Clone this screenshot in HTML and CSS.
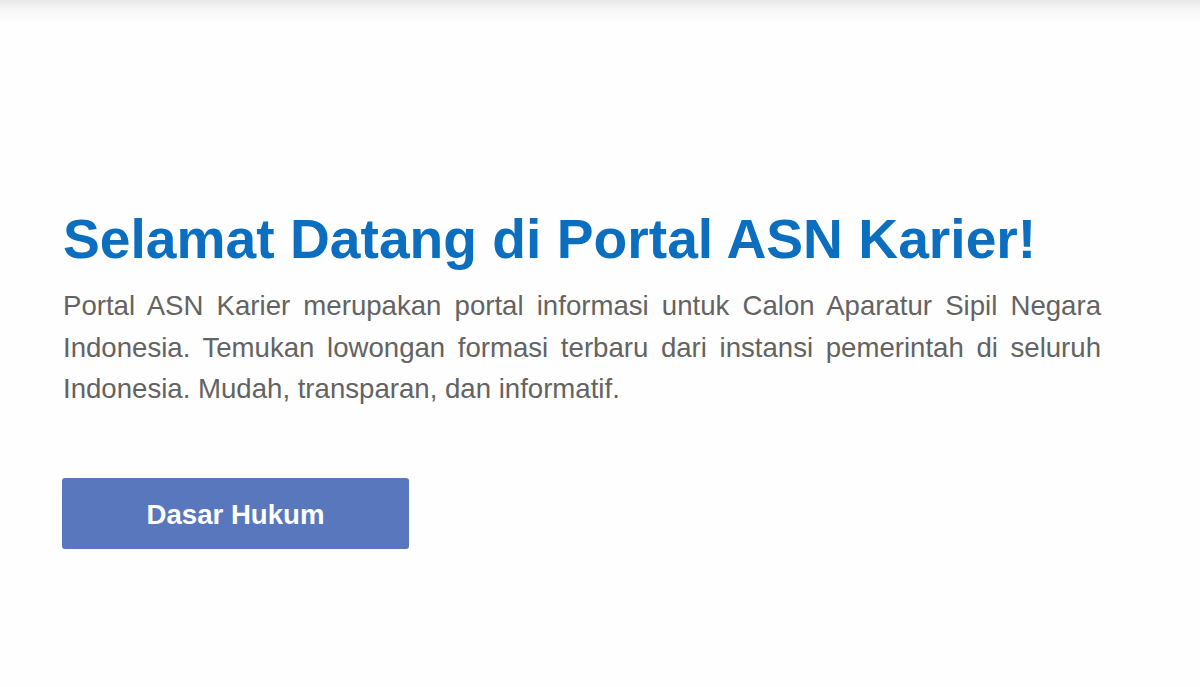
FILE: index.html
```html
<!DOCTYPE html>
<html lang="id">
<head>
<meta charset="utf-8">
<title>Portal ASN Karier</title>
<link rel="stylesheet" href="styles.css">
</head>
<body>
<div class="topshade"></div>
<main class="hero">
  <h1 class="hero-title">Selamat Datang di Portal ASN Karier!</h1>
  <p class="hero-text">Portal ASN Karier merupakan portal informasi untuk Calon Aparatur Sipil Negara Indonesia. Temukan lowongan formasi terbaru dari instansi pemerintah di seluruh Indonesia. Mudah, transparan, dan informatif.</p>
  <a class="btn" href="#">Dasar Hukum</a>
</main>
</body>
</html>
```
FILE: styles.css
```css
html, body {
  margin: 0;
  padding: 0;
  background: #fefefe;
  font-family: "Liberation Sans", Arial, sans-serif;
}
body {
  width: 1200px;
  height: 687px;
  overflow: hidden;
}
.topshade {
  height: 22px;
  background: linear-gradient(to bottom, #e8e8e8 0%, #f6f6f6 40%, rgba(254,254,254,0) 100%);
}
.hero {
  padding: 184px 0 0 63px;
  width: 1038px;
  display: flex;
  flex-direction: column;
  align-items: flex-start;
}
.hero-title {
  margin: 0;
  font-size: 55.2px;
  line-height: 1.2;
  font-weight: 700;
  color: #0b6ebe;
}
.hero-text {
  margin: 13px 0 0;
  width: 1038px;
  font-size: 27.6px;
  line-height: 41.4px;
  color: #636363;
  text-align: justify;
}
.btn {
  margin-top: 69px;
  margin-left: -1px;
  width: 347px;
  height: 71px;
  padding-top: 2px;
  box-sizing: border-box;
  display: flex;
  align-items: center;
  justify-content: center;
  background: #5977bc;
  border-radius: 3px;
  color: #ffffff;
  font-size: 27.6px;
  font-weight: 700;
  text-decoration: none;
}
```
